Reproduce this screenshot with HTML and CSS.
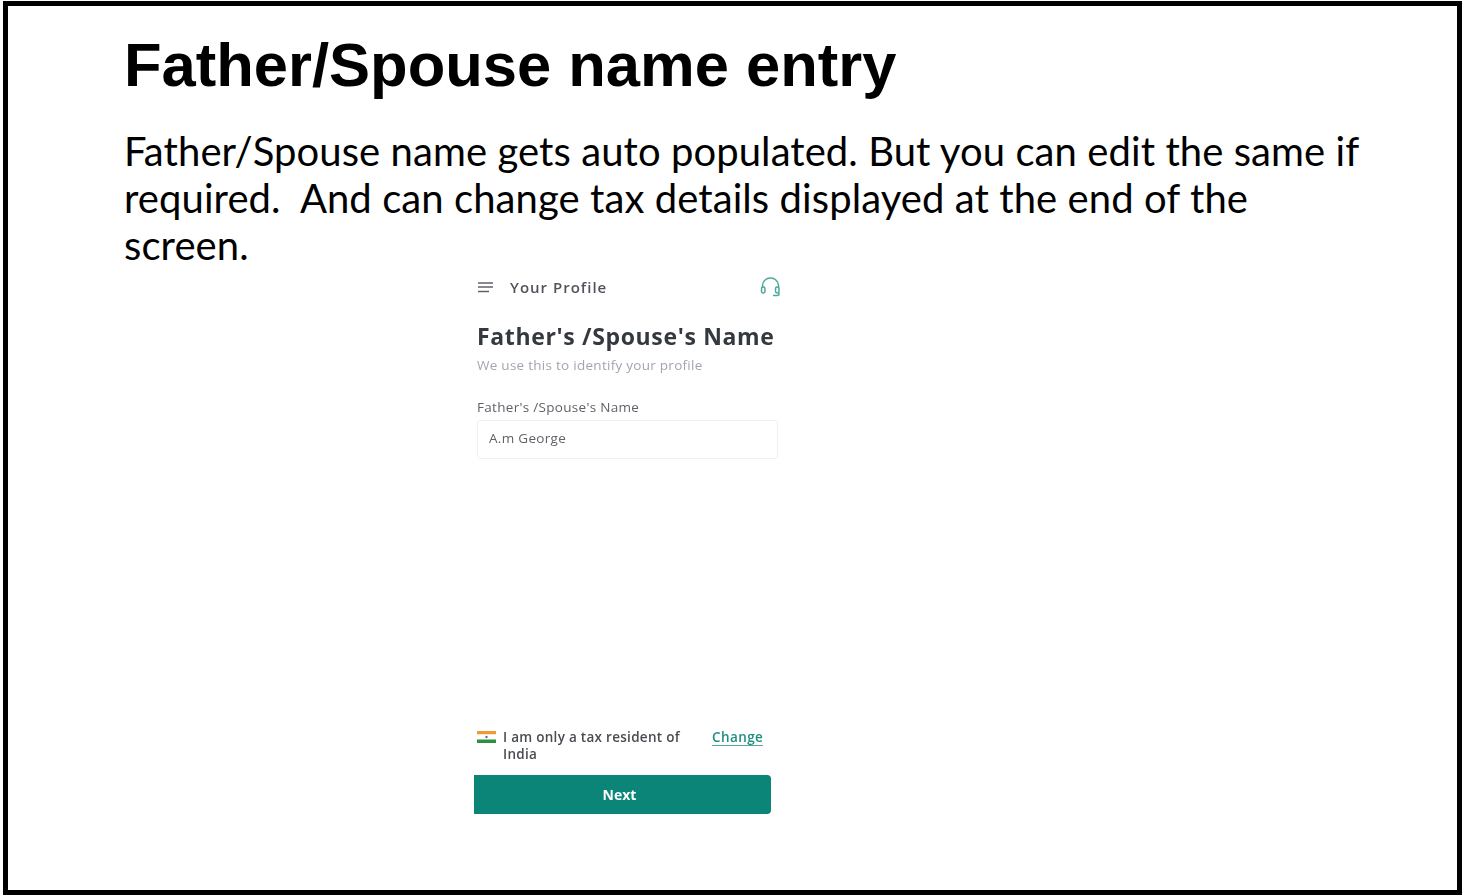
FILE: index.html
```html
<!DOCTYPE html>
<html lang="en">
<head>
  <meta charset="UTF-8">
  <meta name="viewport" content="width=device-width, initial-scale=1.0">
  <title>Father/Spouse name entry</title>
  <link rel="stylesheet" href="styles.css">
</head>
<body>

  <div class="slide">
    <h1>Father/Spouse name entry</h1>
    <p class="intro">Father/Spouse name gets auto populated. But you can edit the same if required.&nbsp; And can change tax details displayed at the end of the screen.</p>

    <div class="phone">
      <div class="top-bar">
        <svg class="menu-icon" width="16" height="11" viewBox="0 0 16 11">
          <path d="M0 1h15M0 5h15M0 9.500h11" fill="none" stroke="#5f6368" stroke-width="1.400"/>
        </svg>
        <span class="top-title">Your Profile</span>
        <svg class="help-icon" width="21" height="20" viewBox="0 0 21 20">
          <path d="M2.500 11V8.500a8 7.500 0 0 1 16 0V11" fill="none" stroke="#4ea89c" stroke-width="1.500"/>
          <rect x="1.500" y="10" width="3.500" height="6" rx="1.700" fill="none" stroke="#4ea89c" stroke-width="1.500"/>
          <rect x="15.500" y="10" width="3.500" height="6" rx="1.700" fill="none" stroke="#4ea89c" stroke-width="1.500"/>
          <path d="M19 15.500v1.500a1.500 1.500 0 0 1-1.500 1.500H13" fill="none" stroke="#4ea89c" stroke-width="1.500"/>
        </svg>
      </div>

      <h2>Father's /Spouse's Name</h2>
      <p class="hint">We use this to identify your profile</p>

      <label class="field-label">Father's /Spouse's Name</label>
      <div class="field">A.m George</div>

      <div class="spacer"></div>

      <div class="tax-row">
        <svg class="flag" width="19" height="12" viewBox="0 0 19 12">
          <rect width="19" height="3.500" fill="#f09a36"/>
          <rect y="3.500" width="19" height="5" fill="#fff"/>
          <rect y="8.500" width="19" height="3.500" fill="#2f8f3a"/>
          <circle cx="9.500" cy="6" r="1.200" fill="#5a6a9a"/>
        </svg>
        <span class="tax-text">I am only a tax resident of India</span>
        <a class="change-link">Change</a>
      </div>
      <button class="next-btn">Next</button>
    </div>
  </div>

</body>
</html>
```

FILE: styles.css
```css
html, body {
  margin: 0;
  padding: 0;
  background-color: #fff;
}
.slide {
  box-sizing: border-box;
  width: 1459px;
  height: 894px;
  margin: 1px 0 0 3px;
  padding: 27px 90px 0 116px;
  border: 5px solid #000;
  background-color: #fff;
  color: #000;
  overflow: hidden;
}
h1 {
  margin: 0;
  font-family: "Liberation Sans", Arial, sans-serif;
  font-size: 61.500px;
  line-height: 64px;
  font-weight: 700;
}
.intro {
  margin: 31px 0 0;
  font-family: Lato, "Open Sans", sans-serif;
  font-size: 40px;
  line-height: 47px;
  letter-spacing: 0.08px;
}

/* phone screenshot pasted in the slide */
.phone {
  box-sizing: border-box;
  display: flex;
  flex-direction: column;
  width: 310px;
  height: 541px;
  margin: 4px 0 0 350px;
  font-family: "Open Sans", "Noto Sans", sans-serif;
  color: #3c4043;
  filter: blur(0.4px);
}
.top-bar {
  display: flex;
  align-items: center;
  height: 28px;
  padding-left: 4px;
  flex-shrink: 0;
}
.menu-icon {
  margin-right: 16px;
}
.top-title {
  font-size: 15px;
  font-weight: 600;
  letter-spacing: 1px;
  color: #50545a;
}
.help-icon {
  margin-left: auto;
  margin-right: 3px;
}
h2 {
  margin: 21px 0 0 3px;
  font-size: 23px;
  line-height: 28px;
  font-weight: 700;
  letter-spacing: 0.65px;
  color: #34383f;
}
.hint {
  margin: 6px 0 0 3px;
  font-size: 13.500px;
  line-height: 18px;
  letter-spacing: 0.27px;
  color: #a2a6af;
}
.field-label {
  display: block;
  margin: 24px 0 0 3px;
  font-size: 13.500px;
  line-height: 18px;
  letter-spacing: 0.3px;
  color: #5f6368;
}
.field {
  box-sizing: border-box;
  width: 301px;
  height: 39px;
  margin: 4px 0 0 3px;
  padding-left: 11px;
  border: 1px solid #eef0f2;
  border-radius: 3px;
  font-size: 13.500px;
  line-height: 35px;
  letter-spacing: 0.3px;
  color: #5f6368;
}
.spacer {
  flex: 1;
}
.tax-row {
  display: flex;
  align-items: flex-start;
  padding-left: 3px;
  font-size: 13.500px;
  line-height: 17px;
  font-weight: 600;
  letter-spacing: 0.28px;
  color: #484c51;
}
.flag {
  flex-shrink: 0;
  margin: 2px 7px 0 0;
}
.tax-text {
  width: 190px;
}
.change-link {
  margin-left: 19px;
  border-bottom: 1px solid #4ea89c;
  line-height: 16px;
  letter-spacing: 0.4px;
  color: #1f8f80;
}
.next-btn {
  width: 297px;
  height: 39px;
  margin-top: 12px;
  padding: 0 6px 0 0;
  border: none;
  border-radius: 0 4px 4px 0;
  background-color: #0a8577;
  color: #fff;
  font-family: "Open Sans", "Noto Sans", sans-serif;
  font-size: 14px;
  font-weight: 700;
}
```
